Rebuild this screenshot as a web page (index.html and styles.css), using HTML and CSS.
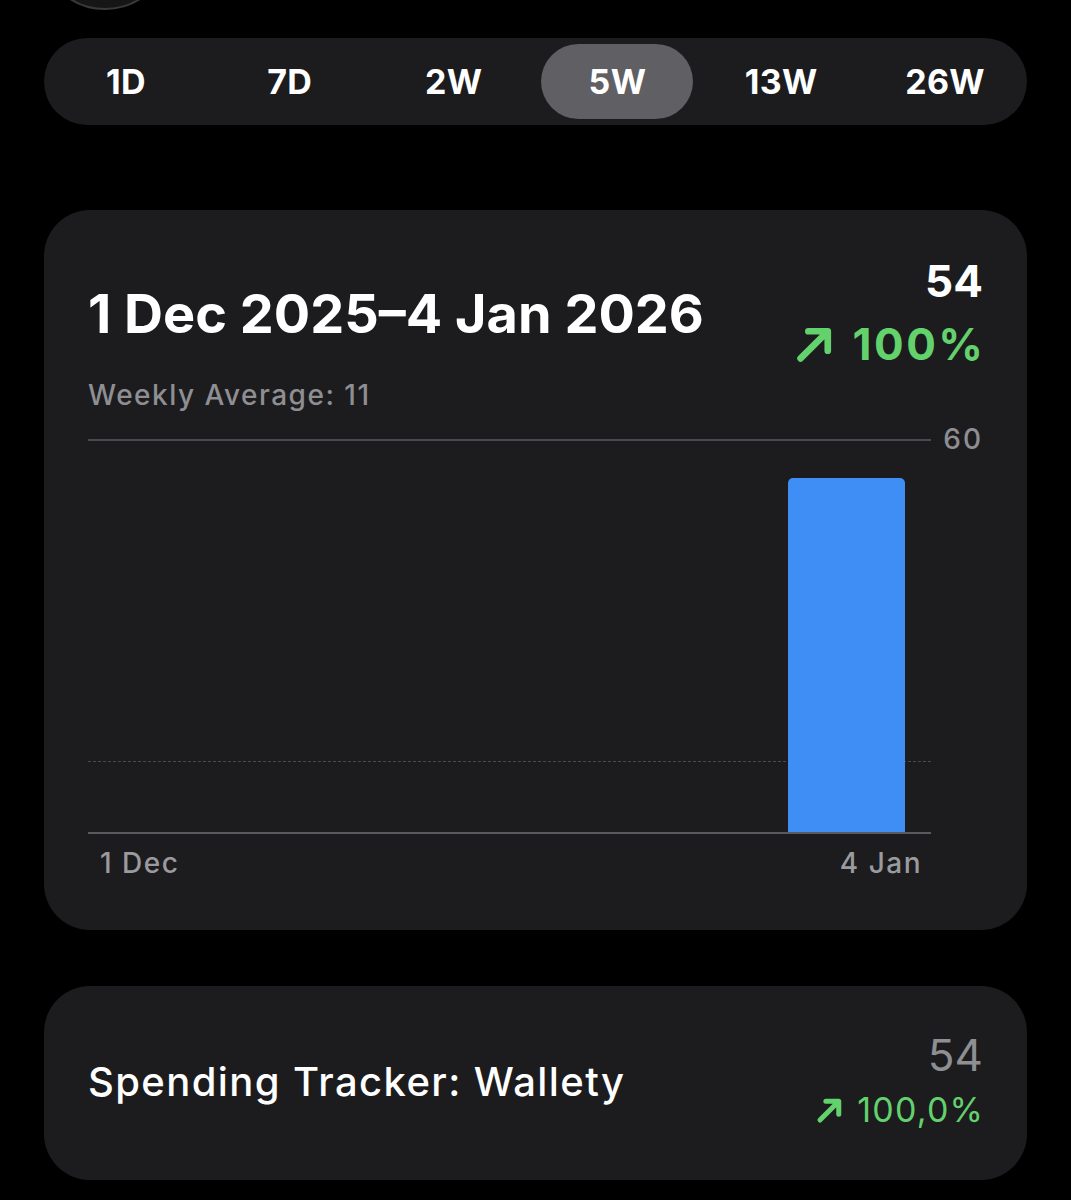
FILE: index.html
```html
<!DOCTYPE html>
<html>
<head>
<meta charset="utf-8">
<link rel="stylesheet" href="styles.css">
</head>
<body>
<div class="top"><div class="avatar"></div></div>

<div class="segmented">
  <div class="seg">1D</div>
  <div class="seg">7D</div>
  <div class="seg">2W</div>
  <div class="seg active">5W</div>
  <div class="seg">13W</div>
  <div class="seg">26W</div>
</div>

<div class="card chart-card">
  <div class="card-head">
    <div class="head-left">
      <div class="title">1 Dec 2025–4 Jan 2026</div>
      <div class="subtitle">Weekly Average: 11</div>
    </div>
    <div class="head-right">
      <div class="total">54</div>
      <div class="change">
        <svg class="arrow-big" viewBox="0 0 36 36"><path d="M5 31 L29 7 M12 6.5 H29.5 V24" fill="none" stroke="currentColor" stroke-width="6" stroke-linecap="round" stroke-linejoin="round"/></svg>
        <span class="change-text">100%</span>
      </div>
    </div>
  </div>

  <div class="chart">
    <div class="plot-row">
      <div class="plot">
        <div class="grid-top"></div>
        <div class="avg-line"></div>
        <div class="slot"></div>
        <div class="slot"></div>
        <div class="slot"></div>
        <div class="slot"></div>
        <div class="slot"><div class="bar" style="height: 90%"></div></div>
      </div>
      <div class="y-label">60</div>
    </div>
    <div class="x-labels">
      <span>1 Dec</span>
      <span>4 Jan</span>
    </div>
  </div>
</div>

<div class="card app-card">
  <div class="app-name">Spending Tracker: Wallety</div>
  <div class="app-right">
    <div class="app-total">54</div>
    <div class="app-change">
      <svg class="arrow-small" viewBox="0 0 36 36"><path d="M6 30 L28 8 M13 7.5 H28.5 V23" fill="none" stroke="currentColor" stroke-width="6" stroke-linecap="round" stroke-linejoin="round"/></svg>
      <span class="app-change-text">100,0%</span>
    </div>
  </div>
</div>
</body>
</html>
```

FILE: styles.css
```css
* { box-sizing: border-box; }

html, body {
  margin: 0;
  padding: 0;
  background: #000;
  height: 1200px;
  overflow: hidden;
}

body {
  font-family: Inter, Roboto, "Liberation Sans", sans-serif;
  color: #fff;
}

.top {
  height: 12px;
  overflow: hidden;
  padding-left: 39px;
}

.avatar {
  width: 132px;
  height: 132px;
  margin-top: -122px;
  border-radius: 50%;
  background: #161617;
  border: 2px solid #3a3a3c;
}

.segmented {
  margin: 26px 44px 0;
  height: 87px;
  border-radius: 44px;
  background: #1c1c1e;
  padding: 6px 0;
  display: grid;
  grid-template-columns: repeat(6, 1fr);
}

.seg {
  display: flex;
  align-items: center;
  justify-content: center;
  font-size: 34px;
  font-weight: 700;
  letter-spacing: 0.3px;
  color: #fff;
  border-radius: 38px;
}

.seg.active {
  background: #5f5f64;
  margin: 0 6px;
}

.card {
  margin: 0 44px;
  background: #1c1c1e;
  border-radius: 46px;
}

.chart-card {
  margin-top: 85px;
  height: 720px;
  padding: 44px 44px 0 44px;
}

.card-head {
  display: flex;
  justify-content: space-between;
  align-items: flex-start;
}

.title {
  margin-top: 28px;
  font-size: 54px;
  line-height: 64px;
  font-weight: 700;
  letter-spacing: 0;
}

.subtitle {
  margin-top: 31px;
  font-size: 28px;
  line-height: 36px;
  font-weight: 500;
  letter-spacing: 1.5px;
  color: #8e8e93;
}

.head-right {
  display: flex;
  flex-direction: column;
  align-items: flex-end;
  padding-top: 1px;
}

.total {
  font-size: 44px;
  line-height: 52px;
  font-weight: 700;
}

.change {
  display: flex;
  align-items: center;
  gap: 18px;
  margin-top: 11px;
  color: #63d16c;
  font-size: 44px;
  line-height: 52px;
  font-weight: 700;
}

.change-text {
  letter-spacing: 2.5px;
  margin-right: -2.5px;
}

.arrow-big {
  width: 40px;
  height: 40px;
}

.chart {
  margin-top: 26px;
}

.plot-row {
  display: flex;
  align-items: flex-start;
}

.plot {
  position: relative;
  width: 844px;
  height: 395px;
  display: flex;
  align-items: flex-end;
  border-bottom: 2px solid #5a5a5e;
}

.grid-top {
  position: absolute;
  left: 0;
  right: 0;
  top: 0;
  border-top: 2px solid #4a4a4e;
}

.avg-line {
  position: absolute;
  left: 0;
  right: 0;
  bottom: 70px;
  border-top: 1px dashed #4a4a4e;
}

.slot {
  flex: 1;
  height: 100%;
  display: flex;
  align-items: flex-end;
  justify-content: center;
}

.bar {
  width: 117px;
  background: #3f8ef6;
  border-radius: 5px 5px 0 0;
  position: relative;
}

.y-label {
  margin-top: -17px;
  margin-left: 12px;
  font-size: 28px;
  line-height: 34px;
  font-weight: 500;
  letter-spacing: 2px;
  color: #8e8e93;
}

.x-labels {
  width: 844px;
  display: flex;
  justify-content: space-between;
  padding: 0 10px 0 12px;
  margin-top: 12px;
  font-size: 28px;
  line-height: 34px;
  font-weight: 500;
  letter-spacing: 1.5px;
  color: #9a9a9f;
}

.app-card {
  margin-top: 56px;
  height: 194px;
  padding: 0 44px;
  display: flex;
  align-items: center;
  justify-content: space-between;
}

.app-name {
  font-size: 40px;
  line-height: 48px;
  font-weight: 500;
  letter-spacing: 1.4px;
  margin-top: -3px;
}

.app-right {
  display: flex;
  flex-direction: column;
  align-items: flex-end;
  margin-top: -6px;
}

.app-total {
  font-size: 44px;
  line-height: 50px;
  color: #8e8e93;
}

.app-change {
  display: flex;
  align-items: center;
  gap: 12px;
  margin-top: 10px;
  color: #63d16c;
  font-size: 34px;
  line-height: 40px;
}

.app-change-text {
  letter-spacing: 1.2px;
  margin-right: -1.2px;
}

.arrow-small {
  width: 30px;
  height: 30px;
}
```
